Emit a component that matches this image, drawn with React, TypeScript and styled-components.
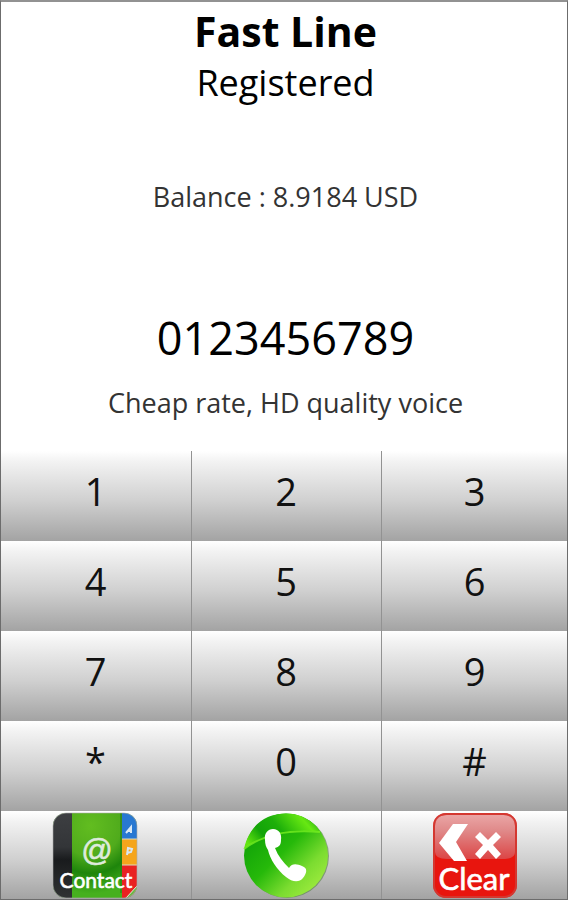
import React from "react";
import styled, { createGlobalStyle } from "styled-components";

const GlobalStyle = createGlobalStyle`
  *, *::before, *::after { box-sizing: border-box; }
  body {
    margin: 0;
    background: #fff;
    color: #000;
    font-family: "Open Sans", "Noto Sans", sans-serif;
  }
`;

const Phone = styled.main`
  display: flex;
  flex-direction: column;
  min-height: 100vh;
  border: 1px solid #6c6c6c;
  border-top: 2px solid #929292;
`;

const Display = styled.header`
  flex: 1;
  display: flex;
  flex-direction: column;
  align-items: center;
  padding-left: 3px;
  text-align: center;
`;

const Title = styled.h1`
  margin: 0;
  padding-top: 3px;
  font-size: 41px;
  line-height: 52px;
  font-weight: 700;
`;

const Status = styled.p`
  margin: 0;
  font-size: 36px;
  line-height: 52px;
`;

const Note = styled.p`
  margin: 0;
  font-size: 27px;
  line-height: 40px;
  color: #333;
`;

const Balance = styled(Note)`
  margin: 68px 0;
`;

const DialInput = styled.input`
  width: 100%;
  height: 64px;
  margin: 20px 0 14px;
  padding: 0;
  border: 0;
  outline: 0;
  background: transparent;
  color: #000;
  font: 45px "Open Sans", "Noto Sans", sans-serif;
  text-align: center;
`;

const Keypad = styled.section`
  display: grid;
  grid-template-columns: 191fr 190fr 185fr;
  grid-template-rows: repeat(4, 90px) 88px;
`;

const Key = styled.button<{ $action?: boolean }>`
  display: flex;
  align-items: center;
  justify-content: center;
  padding: ${(p) => (p.$action ? "0 2px 0 0" : "0 1px 10px 0")};
  border: 0;
  border-right: 1px solid #929292;
  background: linear-gradient(#fff 0%, #f2f2f2 12%, #d0d0d0 55%, #a3a3a3 100%);
  color: #111;
  font: 38px "Open Sans", "Noto Sans", sans-serif;
  cursor: pointer;

  &:nth-child(3n) {
    padding-right: 0;
    border-right: 0;
  }
`;

const Icon = styled.svg`
  display: block;
  width: 88px;
  height: 88px;
  overflow: visible;
`;

const IconText = styled.text`
  font-family: Lato, sans-serif;
  font-weight: 400;
  fill: #fff;
  stroke: #fff;
  stroke-width: 0.6;
`;

const keys = ["1", "2", "3", "4", "5", "6", "7", "8", "9", "*", "0", "#"];

function ContactIcon() {
  return (
    <Icon viewBox="0 0 88 88" aria-hidden="true">
      <defs>
        <clipPath id="book"><rect x="2" y="2" width="84" height="85" rx="13" /></clipPath>
        <radialGradient id="cover" cx=".45" cy=".15" r=".8">
          <stop offset="0" stopColor="#62bd20" />
          <stop offset=".45" stopColor="#50ab1c" />
          <stop offset=".7" stopColor="#1e850b" />
          <stop offset="1" stopColor="#46b01e" />
        </radialGradient>
        <linearGradient id="spine" x1="0" y1="0" x2="0" y2="1">
          <stop offset="0" stopColor="#3d3f42" />
          <stop offset=".4" stopColor="#333538" />
          <stop offset=".55" stopColor="#191b1d" />
          <stop offset="1" stopColor="#303233" />
        </linearGradient>
      </defs>
      <g clipPath="url(#book)">
        <rect x="2" y="2" width="84" height="85" fill="url(#cover)" />
        <rect x="2" y="2" width="19" height="85" fill="url(#spine)" />
        <rect x="71" y="2" width="15" height="26" fill="#2878d2" />
        <rect x="71" y="28" width="15" height="26" fill="#f5a51c" />
        <rect x="71" y="54" width="15" height="33" fill="#e92222" />
        <path d="M71 28h15M71 54h15" stroke="#d8d9be" />
        <path d="M70 2v80" stroke="#267b14" />
        <path d="M75 22l5-6v6M76 20h4M76 44l1-7 4 1-1 3-4 1" fill="none" stroke="#d8e8f5" strokeWidth="2" />
        <path d="M75 87l11-12v12z" fill="#68b944" />
        <path d="M75 87l11-12" stroke="#e5eadb" strokeWidth="1" />
      </g>
      <rect x="2" y="2" width="84" height="85" rx="13" fill="none" stroke="#aaa" strokeOpacity=".6" />
      <text x="46" y="50" textAnchor="middle" fontFamily="Liberation Sans, sans-serif" fontSize="31" fill="#dfebdc" stroke="#dfebdc" strokeWidth=".6">@</text>
      <IconText x="45" y="77" textAnchor="middle" fontSize="21">Contact</IconText>
    </Icon>
  );
}

function CallIcon() {
  return (
    <Icon viewBox="0 0 88 88" aria-hidden="true">
      <defs>
        <linearGradient id="call" x1=".1" y1=".1" x2=".9" y2=".9">
          <stop offset="0" stopColor="#0b9d08" />
          <stop offset=".45" stopColor="#26b90a" />
          <stop offset=".75" stopColor="#7bdc30" />
          <stop offset="1" stopColor="#a0ec40" />
        </linearGradient>
        <linearGradient id="shine" x1="0" y1=".7" x2="1" y2=".3">
          <stop offset="0" stopColor="#62e510" />
          <stop offset=".25" stopColor="#13a408" />
          <stop offset=".5" stopColor="#1daf0a" />
          <stop offset=".85" stopColor="#67e812" />
          <stop offset="1" stopColor="#30b514" />
        </linearGradient>
      </defs>
      <circle cx="45" cy="45" r="42" fill="#517f42" opacity=".6" />
      <circle cx="44" cy="44.5" r="42" fill="url(#call)" />
      <path d="M2 38C7 15 23 2.5 44 2.5c15 0 27 7 34 18-31-3-54 0-76 17z" fill="url(#shine)" />
      <path d="M2 38c18-14 43-20 76-17" fill="none" stroke="#76ed20" strokeWidth="2" opacity=".8" />
      <path d="M23 29c-1-7 3-11 8-11 6 0 9 5 8 11 0 5-2 7-6 8 3 8 8 14 14 20 3-5 8-4 13-2 6 2 5 7 1 12-4 5-11 4-17-1-9-7-16-18-18-27-2-3-3-6-3-10z" fill="#fff" />
    </Icon>
  );
}

function ClearIcon() {
  return (
    <Icon viewBox="0 0 88 88" aria-hidden="true">
      <defs>
        <linearGradient id="clear-shine" x1="0" y1="0" x2="0" y2="1">
          <stop offset="0" stopColor="#eaa5a5" />
          <stop offset=".35" stopColor="#e08a8a" />
          <stop offset="1" stopColor="#dc4545" />
        </linearGradient>
      </defs>
      <rect x="2" y="2" width="84" height="85" rx="13" fill="#e8150e" />
      <path d="M4 15Q4 4 16 4h56q12 0 12 11v26c0 5-5 7-12 7H16Q4 48 4 41z" fill="url(#clear-shine)" />
      <rect x="3" y="3" width="82" height="83" rx="12" fill="none" stroke="#c94a43" strokeWidth="2" opacity=".65" />
      <path d="M22 13h15L25 31l11 19H23L8 32zM44 26l5-5 8 8 8-8 5 5-8 8 8 9-5 5-8-9-8 9-5-5 8-9z" fill="#fff" />
      <IconText x="43" y="79" textAnchor="middle" fontSize="31">Clear</IconText>
    </Icon>
  );
}

export default function App() {
  const [number, setNumber] = React.useState("0123456789");
  const press = (key: string) => setNumber((current) => current + key);

  return (
    <>
      <GlobalStyle />
      <Phone>
        <Display>
          <Title>Fast Line</Title>
          <Status>Registered</Status>
          <Balance>Balance : 8.9184 USD</Balance>
          <DialInput
            type="tel"
            aria-label="Phone number"
            value={number}
            onChange={(event) => setNumber(event.target.value)}
          />
          <Note>Cheap rate, HD quality voice</Note>
        </Display>
        <Keypad aria-label="Dial pad">
          {keys.map((key) => (
            <Key key={key} type="button" onClick={() => press(key)}>{key}</Key>
          ))}
          <Key $action type="button" aria-label="Contact"><ContactIcon /></Key>
          <Key $action type="button" aria-label="Call"><CallIcon /></Key>
          <Key $action type="button" aria-label="Clear" onClick={() => setNumber("")}><ClearIcon /></Key>
        </Keypad>
      </Phone>
    </>
  );
}
